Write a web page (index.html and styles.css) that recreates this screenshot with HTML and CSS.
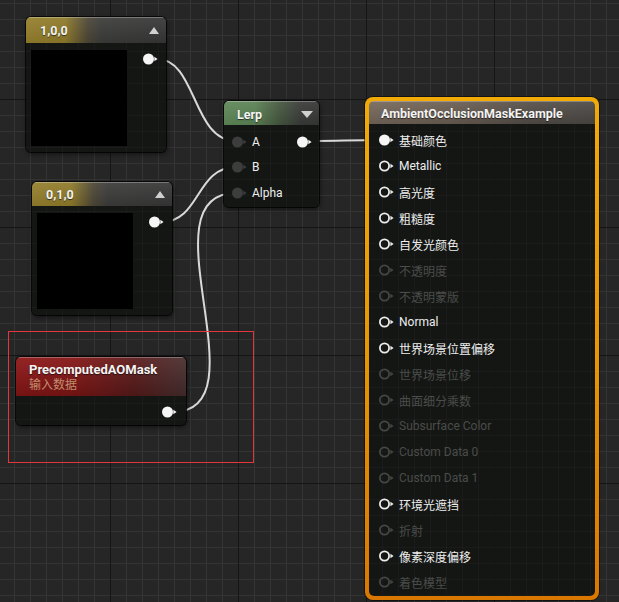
FILE: index.html
```html
<!DOCTYPE html>
<html>
<head>
<meta charset="utf-8">
<link rel="stylesheet" href="styles.css">
</head>
<body>
<div class="canvas">
  <svg class="wires" width="619" height="602" viewBox="0 0 619 602">
    <path d="M157 59 C197 59 192 141 236 141"/>
    <path d="M162 222 C200 222 196 167 236 167"/>
    <path d="M173 412 C266 412 141 193 236 193"/>
    <path d="M310 141 C340 141 350 140 382 140"/>
  </svg>

  <div class="selection"></div>

  <div class="node const n1">
    <div class="hdr hdr-gold hdr-const"><span class="title">1,0,0</span><span class="tri up"></span></div>
    <div class="body const-body">
      <div class="preview"></div>
      <svg class="pin pin-out" width="16" height="12" viewBox="0 0 16 12"><circle cx="5.5" cy="6" r="5.5"/><path d="M11.3 3.8 L14.6 6 L11.3 8.2Z"/></svg>
    </div>
  </div>

  <div class="node const n2">
    <div class="hdr hdr-gold hdr-const2"><span class="title">0,1,0</span><span class="tri up"></span></div>
    <div class="body const-body">
      <div class="preview"></div>
      <svg class="pin pin-out" width="16" height="12" viewBox="0 0 16 12"><circle cx="5.5" cy="6" r="5.5"/><path d="M11.3 3.8 L14.6 6 L11.3 8.2Z"/></svg>
    </div>
  </div>

  <div class="node lerp">
    <div class="hdr hdr-green"><span class="title">Lerp</span><span class="tri down"></span></div>
    <div class="body lerp-body">
      <div class="row">
        <svg class="pin pin-grey" width="16" height="12" viewBox="0 0 16 12"><circle cx="5.5" cy="6" r="5.5"/><path d="M11.3 3.8 L14.6 6 L11.3 8.2Z"/></svg>
        <span class="label">A</span>
        <svg class="pin pin-out right" width="16" height="12" viewBox="0 0 16 12"><circle cx="5.5" cy="6" r="5.5"/><path d="M11.3 3.8 L14.6 6 L11.3 8.2Z"/></svg>
      </div>
      <div class="row">
        <svg class="pin pin-grey" width="16" height="12" viewBox="0 0 16 12"><circle cx="5.5" cy="6" r="5.5"/><path d="M11.3 3.8 L14.6 6 L11.3 8.2Z"/></svg>
        <span class="label">B</span>
      </div>
      <div class="row">
        <svg class="pin pin-grey" width="16" height="12" viewBox="0 0 16 12"><circle cx="5.5" cy="6" r="5.5"/><path d="M11.3 3.8 L14.6 6 L11.3 8.2Z"/></svg>
        <span class="label">Alpha</span>
      </div>
    </div>
  </div>

  <div class="node param">
    <div class="hdr hdr-red">
      <span class="title">PrecomputedAOMask</span>
      <span class="subtitle">输入数据</span>
    </div>
    <div class="body param-body">
      <svg class="pin pin-out" width="16" height="12" viewBox="0 0 16 12"><circle cx="5.5" cy="6" r="5.5"/><path d="M11.3 3.8 L14.6 6 L11.3 8.2Z"/></svg>
    </div>
  </div>

  <div class="focus">
    <div class="node main">
      <div class="hdr hdr-brown"><span class="title">AmbientOcclusionMaskExample</span></div>
      <div class="body main-body">
        <div class="row"><svg class="pin pin-fill" width="16" height="12" viewBox="0 0 16 12"><circle cx="5.5" cy="6" r="5.5"/><path d="M11.3 3.8 L14.6 6 L11.3 8.2Z"/></svg><span class="label">基础颜色</span></div>
        <div class="row"><svg class="pin pin-hollow" width="16" height="12" viewBox="0 0 16 12"><circle cx="5.5" cy="6" r="4.6"/><path d="M11.4 3.8 L14.6 6 L11.4 8.2Z"/></svg><span class="label">Metallic</span></div>
        <div class="row"><svg class="pin pin-hollow" width="16" height="12" viewBox="0 0 16 12"><circle cx="5.5" cy="6" r="4.6"/><path d="M11.4 3.8 L14.6 6 L11.4 8.2Z"/></svg><span class="label">高光度</span></div>
        <div class="row"><svg class="pin pin-hollow" width="16" height="12" viewBox="0 0 16 12"><circle cx="5.5" cy="6" r="4.6"/><path d="M11.4 3.8 L14.6 6 L11.4 8.2Z"/></svg><span class="label">粗糙度</span></div>
        <div class="row"><svg class="pin pin-hollow" width="16" height="12" viewBox="0 0 16 12"><circle cx="5.5" cy="6" r="4.6"/><path d="M11.4 3.8 L14.6 6 L11.4 8.2Z"/></svg><span class="label">自发光颜色</span></div>
        <div class="row dim"><svg class="pin pin-hollow" width="16" height="12" viewBox="0 0 16 12"><circle cx="5.5" cy="6" r="4.6"/><path d="M11.4 3.8 L14.6 6 L11.4 8.2Z"/></svg><span class="label">不透明度</span></div>
        <div class="row dim"><svg class="pin pin-hollow" width="16" height="12" viewBox="0 0 16 12"><circle cx="5.5" cy="6" r="4.6"/><path d="M11.4 3.8 L14.6 6 L11.4 8.2Z"/></svg><span class="label">不透明蒙版</span></div>
        <div class="row"><svg class="pin pin-hollow" width="16" height="12" viewBox="0 0 16 12"><circle cx="5.5" cy="6" r="4.6"/><path d="M11.4 3.8 L14.6 6 L11.4 8.2Z"/></svg><span class="label">Normal</span></div>
        <div class="row"><svg class="pin pin-hollow" width="16" height="12" viewBox="0 0 16 12"><circle cx="5.5" cy="6" r="4.6"/><path d="M11.4 3.8 L14.6 6 L11.4 8.2Z"/></svg><span class="label">世界场景位置偏移</span></div>
        <div class="row dim"><svg class="pin pin-hollow" width="16" height="12" viewBox="0 0 16 12"><circle cx="5.5" cy="6" r="4.6"/><path d="M11.4 3.8 L14.6 6 L11.4 8.2Z"/></svg><span class="label">世界场景位移</span></div>
        <div class="row dim"><svg class="pin pin-hollow" width="16" height="12" viewBox="0 0 16 12"><circle cx="5.5" cy="6" r="4.6"/><path d="M11.4 3.8 L14.6 6 L11.4 8.2Z"/></svg><span class="label">曲面细分乘数</span></div>
        <div class="row dim"><svg class="pin pin-hollow" width="16" height="12" viewBox="0 0 16 12"><circle cx="5.5" cy="6" r="4.6"/><path d="M11.4 3.8 L14.6 6 L11.4 8.2Z"/></svg><span class="label">Subsurface Color</span></div>
        <div class="row dim"><svg class="pin pin-hollow" width="16" height="12" viewBox="0 0 16 12"><circle cx="5.5" cy="6" r="4.6"/><path d="M11.4 3.8 L14.6 6 L11.4 8.2Z"/></svg><span class="label">Custom Data 0</span></div>
        <div class="row dim"><svg class="pin pin-hollow" width="16" height="12" viewBox="0 0 16 12"><circle cx="5.5" cy="6" r="4.6"/><path d="M11.4 3.8 L14.6 6 L11.4 8.2Z"/></svg><span class="label">Custom Data 1</span></div>
        <div class="row"><svg class="pin pin-hollow" width="16" height="12" viewBox="0 0 16 12"><circle cx="5.5" cy="6" r="4.6"/><path d="M11.4 3.8 L14.6 6 L11.4 8.2Z"/></svg><span class="label">环境光遮挡</span></div>
        <div class="row dim"><svg class="pin pin-hollow" width="16" height="12" viewBox="0 0 16 12"><circle cx="5.5" cy="6" r="4.6"/><path d="M11.4 3.8 L14.6 6 L11.4 8.2Z"/></svg><span class="label">折射</span></div>
        <div class="row"><svg class="pin pin-hollow" width="16" height="12" viewBox="0 0 16 12"><circle cx="5.5" cy="6" r="4.6"/><path d="M11.4 3.8 L14.6 6 L11.4 8.2Z"/></svg><span class="label">像素深度偏移</span></div>
        <div class="row dim"><svg class="pin pin-hollow" width="16" height="12" viewBox="0 0 16 12"><circle cx="5.5" cy="6" r="4.6"/><path d="M11.4 3.8 L14.6 6 L11.4 8.2Z"/></svg><span class="label">着色模型</span></div>
      </div>
    </div>
  </div>
</div>
</body>
</html>
```

FILE: styles.css
```css
* { box-sizing: border-box; }
html, body { margin: 0; padding: 0; }
body {
  width: 619px;
  height: 602px;
  overflow: hidden;
  background: #262626;
  font-family: Roboto, "Noto Sans CJK SC", sans-serif;
}

.canvas {
  position: relative;
  width: 619px;
  height: 602px;
  overflow: hidden;
  background-color: #262626;
  background-image:
    linear-gradient(to right, #151515 1px, transparent 1px),
    linear-gradient(to bottom, #151515 1px, transparent 1px),
    linear-gradient(to right, #343434 1px, transparent 1px),
    linear-gradient(to bottom, #343434 1px, transparent 1px);
  background-size: 128px 128px, 128px 128px, 16px 16px, 16px 16px;
  background-position: 110px 0, 0 99px, 14px 0, 0 3px;
}

.wires {
  position: absolute;
  left: 0;
  top: 0;
  fill: none;
  stroke: #d9d9d9;
  stroke-width: 2;
}

.selection {
  position: absolute;
  left: 8px;
  top: 331px;
  width: 246px;
  height: 132px;
  border: 1px solid #e2373c;
}

/* ---------- nodes ---------- */
.node {
  position: absolute;
  display: flex;
  flex-direction: column;
  border-radius: 5px;
  overflow: hidden;
  box-shadow: 0 0 0 1px rgba(0, 0, 0, 0.75), 1px 2px 5px rgba(0, 0, 0, 0.55);
}

.hdr {
  display: flex;
  align-items: center;
  flex: none;
  color: #f4f4f4;
  font-weight: 700;
  font-size: 12px;
  text-shadow: 0 1px 1px rgba(0, 0, 0, 0.6);
  box-shadow: inset 0 1px 0 rgba(255, 255, 255, 0.28);
}

.title { white-space: nowrap; }

.body {
  flex: 1;
  background-color: #141614;
  background-image:
    linear-gradient(to right, rgba(0, 0, 0, 0.25) 1px, transparent 1px),
    linear-gradient(to bottom, rgba(0, 0, 0, 0.25) 1px, transparent 1px),
    linear-gradient(to right, rgba(255, 255, 255, 0.025) 1px, transparent 1px),
    linear-gradient(to bottom, rgba(255, 255, 255, 0.025) 1px, transparent 1px);
  background-size: 128px 128px, 128px 128px, 16px 16px, 16px 16px;
  background-position: 110px 0, 0 99px, 14px 0, 0 3px;
  background-attachment: fixed;
}

.hdr-gold {
  background:
    linear-gradient(to bottom, rgba(255, 255, 255, 0.07), rgba(0, 0, 0, 0.08)),
    linear-gradient(90deg, #957f2c 0%, #8e7a2a 28%, #4c4636 44%, #3b3b3a 54%, #363636 100%);
}
.hdr-green {
  background:
    linear-gradient(to bottom, rgba(255, 255, 255, 0.07), rgba(0, 0, 0, 0.08)),
    linear-gradient(90deg, #5f8758 0%, #5b8254 32%, #45573f 58%, #393b38 80%, #363636 100%);
}
.hdr-brown {
  background:
    linear-gradient(to bottom, rgba(255, 255, 255, 0.08), rgba(0, 0, 0, 0.1)),
    linear-gradient(90deg, #75675a 0%, #6a5e52 35%, #544d47 70%, #4a4744 100%);
}
.hdr-red {
  background:
    linear-gradient(to bottom, rgba(255, 255, 255, 0.06), rgba(0, 0, 0, 0.18)),
    linear-gradient(90deg, #8f1717 0%, #841616 35%, #5c1c1c 70%, #4a3030 100%);
}

.tri { margin-left: auto; width: 0; height: 0; }
.tri.up {
  border-left: 5.5px solid transparent;
  border-right: 5.5px solid transparent;
  border-bottom: 7px solid #d0d0d0;
}
.tri.down {
  border-left: 6px solid transparent;
  border-right: 6px solid transparent;
  border-top: 7px solid #d0d0d0;
}

/* pins */
.pin { display: block; flex: none; }
.pin-out circle, .pin-out path { fill: #f6f6f6; }
.pin-fill circle, .pin-fill path { fill: #f6f6f6; }
.pin-grey circle, .pin-grey path { fill: #3c3d3c; }
.pin-hollow circle { fill: none; stroke: #ededed; stroke-width: 1.8; }
.pin-hollow path { fill: #ededed; }
.dim .pin-hollow circle { stroke: #454745; }
.dim .pin-hollow path { fill: #454745; }

/* constant nodes */
.n1 { left: 26px; top: 17px; width: 140px; height: 135px; }
.n2 { left: 32px; top: 182px; width: 140px; height: 133px; }
.hdr-const { height: 26px; padding: 1px 7px 0 14px; font-size: 12.5px; }
.hdr-const2 { height: 24px; padding: 1px 7px 0 14px; font-size: 12.5px; }
.const-body {
  display: flex;
  align-items: flex-start;
  padding: 7px 7px 0 5px;
}
.preview { width: 96px; height: 96px; background: #000; flex: none; }
.const-body .pin-out { margin-left: auto; margin-top: 3px; }

/* lerp */
.lerp { left: 224px; top: 101px; width: 95px; height: 106px; }
.hdr-green { height: 24px; padding: 2px 6px 0 13px; font-size: 12.5px; }
.lerp-body { padding: 4px 6px 0 8px; }
.row {
  display: flex;
  align-items: center;
  height: 25.5px;
  gap: 4px;
  font-size: 12px;
  color: #eeeeee;
}
.label { white-space: nowrap; }
.pin.right { margin-left: auto; }

/* parameter */
.param { left: 16px; top: 357px; width: 170px; height: 68px; }
.hdr-red {
  flex-direction: column;
  align-items: flex-start;
  height: 39px;
  padding: 4px 13px 0 13px;
}
.hdr-red .title { font-size: 13px; line-height: 17px; }
.subtitle {
  font-size: 12px;
  line-height: 15px;
  font-weight: 400;
  color: #c28c6c;
  text-shadow: none;
}
.param-body {
  display: flex;
  justify-content: flex-end;
  align-items: center;
  padding: 2px 8px 0 0;
}

/* main material node */
.focus {
  position: absolute;
  left: 365px;
  top: 97px;
  width: 234px;
  height: 503px;
  padding: 4px;
  border-radius: 8px;
  background: linear-gradient(to bottom, #f2aa06 0%, #e99600 50%, #d97700 100%);
  box-shadow: 0 0 0 1px rgba(0, 0, 0, 0.5);
}
.main {
  position: relative;
  width: 100%;
  height: 100%;
  border-radius: 5px;
  box-shadow: none;
}
.hdr-brown { height: 23px; padding: 1px 8px 0 12px; font-size: 12.5px; }
.main-body { padding: 3px 0 0 10px; }
.main-body .row { height: 26px; }
.row.dim { color: #4a4c4a; }
```
